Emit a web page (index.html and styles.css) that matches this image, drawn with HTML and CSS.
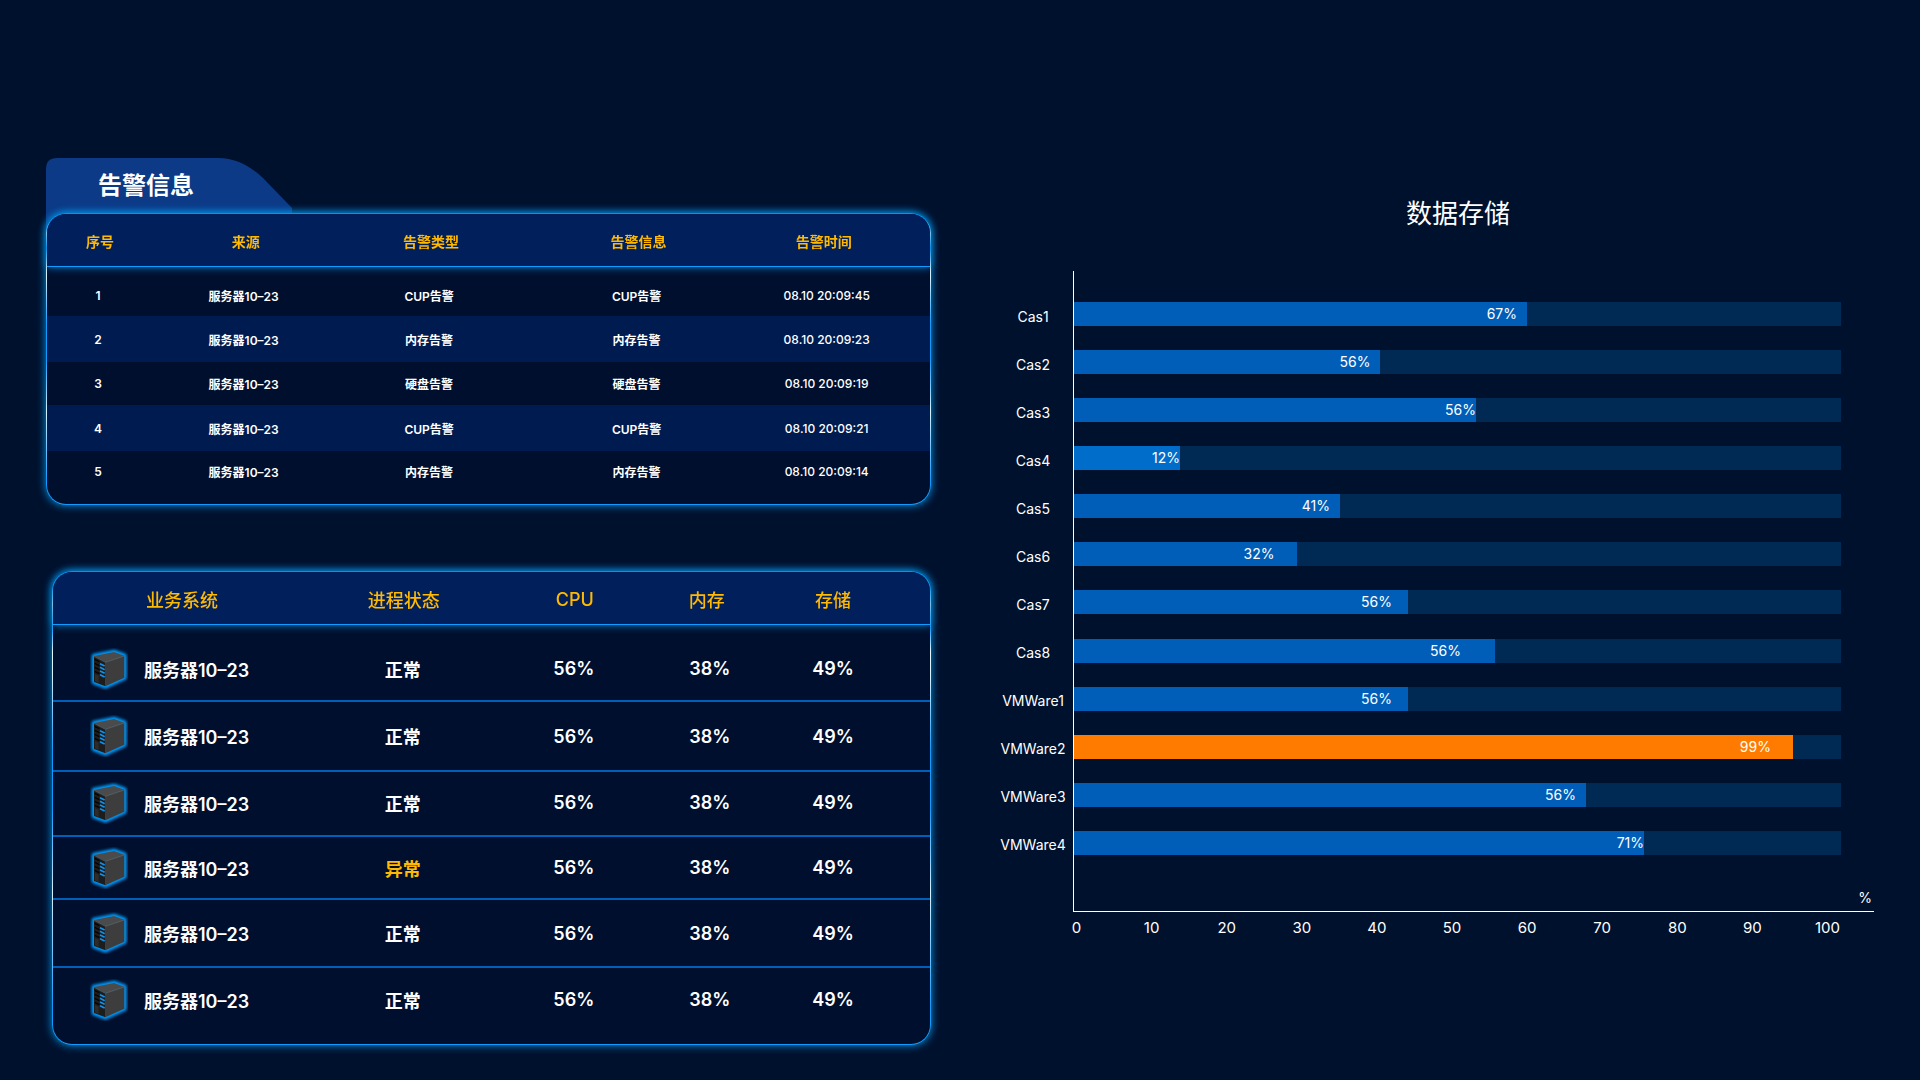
FILE: index.html
```html
<!DOCTYPE html>
<html lang="zh-CN">
<head>
<meta charset="utf-8">
<meta name="viewport" content="width=device-width, initial-scale=1">
<title>告警信息</title>
<link rel="stylesheet" href="styles.css">
</head>
<body>
<svg class="defs" aria-hidden="true">
  <defs>
    <filter id="glow" x="-20%" y="-20%" width="140%" height="140%"><feGaussianBlur stdDeviation="4"/></filter>
    <symbol id="server" viewBox="0 0 114 126">
      <path d="M12 24 72 12 103 23V89L46 115 12 102Z" fill="#009dff" stroke="#009dff" stroke-width="14" stroke-linejoin="round" filter="url(#glow)"/>
      <path d="M12 24 72 12 103 23 46 42Z" fill="#4b4b4b"/>
      <path d="M46 42 103 23V89L46 115Z" fill="#3d3d3d"/>
      <path d="M12 24 46 42V115L12 102Z" fill="#1d1d1d"/>
      <path d="M12 25 46 43 103 24" fill="none" stroke="#626262" stroke-width="2"/>
      <path d="M14 34 28 41M14 46 28 53M14 58 28 65M14 70 28 77" stroke="#050505" stroke-width="4"/>
      <path d="M30 47 44 54M30 58 44 65M30 69 44 76M30 80 44 87" stroke="#1590e8" stroke-width="5"/>
      <path d="M15 78 26 83V105L15 100Z" fill="#2c2c2c"/>
    </symbol>
  </defs>
</svg>
<main class="dashboard">
  <div class="left">
    <section class="alarms">
      <header class="tab">
        <svg class="tab-shape" viewBox="0 0 246 76" aria-hidden="true"><path d="M0 76V11Q0 0 11 0H172C190 0 204 8 217 20L246 50V56H60L0 76Z"/></svg>
        <h2 class="tab-title">告警信息</h2>
      </header>
      <div class="panel">
        <table class="table table-alarms">
          <colgroup><col class="c-no"><col class="c-source"><col class="c-type"><col class="c-info"><col class="c-time"></colgroup>
          <thead><tr><th>序号</th><th>来源</th><th>告警类型</th><th>告警信息</th><th>告警时间</th></tr></thead>
          <tbody>
            <tr><td>1</td><td>服务器10–23</td><td>CUP告警</td><td>CUP告警</td><td>08.10 20:09:45</td></tr>
            <tr><td>2</td><td>服务器10–23</td><td>内存告警</td><td>内存告警</td><td>08.10 20:09:23</td></tr>
            <tr><td>3</td><td>服务器10–23</td><td>硬盘告警</td><td>硬盘告警</td><td>08.10 20:09:19</td></tr>
            <tr><td>4</td><td>服务器10–23</td><td>CUP告警</td><td>CUP告警</td><td>08.10 20:09:21</td></tr>
            <tr><td>5</td><td>服务器10–23</td><td>内存告警</td><td>内存告警</td><td>08.10 20:09:14</td></tr>
          </tbody>
        </table>
      </div>
    </section>
    <section class="panel panel-systems">
      <table class="table table-systems">
        <colgroup><col class="s-name"><col class="s-state"><col class="s-cpu"><col class="s-mem"><col class="s-disk"></colgroup>
        <thead><tr><th>业务系统</th><th>进程状态</th><th>CPU</th><th>内存</th><th>存储</th></tr></thead>
        <tbody>
          <tr><td><span class="name"><svg class="server"><use href="#server"/></svg>服务器10–23</span></td><td>正常</td><td>56%</td><td>38%</td><td>49%</td></tr>
          <tr><td><span class="name"><svg class="server"><use href="#server"/></svg>服务器10–23</span></td><td>正常</td><td>56%</td><td>38%</td><td>49%</td></tr>
          <tr><td><span class="name"><svg class="server"><use href="#server"/></svg>服务器10–23</span></td><td>正常</td><td>56%</td><td>38%</td><td>49%</td></tr>
          <tr><td><span class="name"><svg class="server"><use href="#server"/></svg>服务器10–23</span></td><td class="warn">异常</td><td>56%</td><td>38%</td><td>49%</td></tr>
          <tr><td><span class="name"><svg class="server"><use href="#server"/></svg>服务器10–23</span></td><td>正常</td><td>56%</td><td>38%</td><td>49%</td></tr>
          <tr><td><span class="name"><svg class="server"><use href="#server"/></svg>服务器10–23</span></td><td>正常</td><td>56%</td><td>38%</td><td>49%</td></tr>
        </tbody>
      </table>
    </section>
  </div>
  <section class="storage">
    <h2 class="storage-title">数据存储</h2>
    <div class="chart">
      <ul class="labels">
        <li>Cas1</li><li>Cas2</li><li>Cas3</li><li>Cas4</li><li>Cas5</li><li>Cas6</li><li>Cas7</li><li>Cas8</li><li>VMWare1</li><li>VMWare2</li><li>VMWare3</li><li>VMWare4</li>
      </ul>
      <div class="plot">
        <ul class="bars">
          <li class="track"><span class="fill" style="width:59.06%">67%</span></li>
          <li class="track"><span class="fill" style="width:39.96%">56%</span></li>
          <li class="track"><span class="fill inset-none" style="width:52.41%">56%</span></li>
          <li class="track"><span class="fill fill-light inset-none" style="width:13.82%">12%</span></li>
          <li class="track"><span class="fill" style="width:34.68%">41%</span></li>
          <li class="track"><span class="fill inset-large" style="width:29.01%">32%</span></li>
          <li class="track"><span class="fill inset-medium" style="width:43.55%">56%</span></li>
          <li class="track"><span class="fill inset-huge" style="width:54.89%">56%</span></li>
          <li class="track"><span class="fill inset-medium" style="width:43.55%">56%</span></li>
          <li class="track"><span class="fill fill-warn inset-large" style="width:93.74%">99%</span></li>
          <li class="track"><span class="fill" style="width:66.75%">56%</span></li>
          <li class="track"><span class="fill inset-none" style="width:74.32%">71%</span></li>
        </ul>
        <div class="unit">%</div>
      </div>
      <ol class="ticks">
        <li>0</li><li>10</li><li>20</li><li>30</li><li>40</li><li>50</li><li>60</li><li>70</li><li>80</li><li>90</li><li>100</li>
      </ol>
    </div>
  </section>
</main>
</body>
</html>
```
FILE: styles.css
```css
:root {
  --bg: #00112e;
  --line: #0f9bff;
  --accent: #ffb900;
}

* { box-sizing: border-box; }

body {
  margin: 0;
  min-height: 100vh;
  background: var(--bg);
  color: #fff;
  font-family: Inter, "Noto Sans CJK SC", sans-serif;
}

h2, ul, ol { margin: 0; padding: 0; list-style: none; }

.defs { position: absolute; width: 0; height: 0; }

.dashboard {
  display: grid;
  grid-template-columns: 885fr 876fr;
  column-gap: 67px;
  padding: 158px 46px 35px;
}

/* Alarm tab */
.tab {
  position: relative;
  display: flex;
  height: 55px;
  padding-left: 52px;
}

.tab-shape {
  position: absolute;
  left: 0;
  top: 0;
  width: 246px;
  height: 76px;
  fill: #0c3a86;
}

.tab-title {
  position: relative;
  font-size: 24px;
  font-weight: 600;
  line-height: 56px;
}

/* Panels */
.panel {
  position: relative;
  border: 1px solid transparent;
  border-radius: 20px;
  background:
    linear-gradient(#000f2d, #000f2d) padding-box,
    linear-gradient(var(--line) 3%, #d8f2ff 7%, var(--line) 12%, #e4f6ff 17%, #d8f2ff 22%, var(--line) 38%, var(--line) 50%, #d8f2ff 68%, var(--line) 92%) border-box;
  box-shadow: 0 0 8px #009df0;
}

.panel-systems { margin: 66px 0 0 6px; }

.table {
  width: 100%;
  table-layout: fixed;
  border-collapse: separate;
  border-spacing: 0;
  text-align: center;
}

.table th, .table td { padding: 0; }

.table thead { filter: drop-shadow(0 0 4px #0088d8); }

.table th {
  height: 53px;
  padding-top: 2px;
  background: #001f5b;
  border-bottom: 1px solid var(--line);
  color: var(--accent);
}

.table th:first-child { border-top-left-radius: 19px; }
.table th:last-child { border-top-right-radius: 19px; }
.table th:last-child { padding-right: 36px; }

.table-alarms { font-size: 12px; font-weight: 600; }
.table-alarms th { font-size: 14px; font-weight: 700; }
.table-alarms td { height: 43px; padding-right: 4px; }
.table-alarms tr:nth-child(even) td { height: 46px; background: #001b50; }
.table-alarms tbody tr:first-child td { height: 49px; padding-top: 8px; }
.table-alarms tbody tr:last-child td { height: 53px; padding-bottom: 12px; }
.table-alarms td:last-child { padding-right: 30px; font-weight: 500; }

.c-no { width: 12%; }
.c-source, .c-type { width: 21%; }
.c-info { width: 26%; }
.c-time { width: 20%; }

.table-systems { font-size: 18px; font-weight: 600; }
.table-systems th { font-weight: 500; }
.table-systems th:first-child { padding-left: 93px; text-align: left; }
.table-systems th:nth-child(4) { padding-right: 8px; }
.table-systems td { height: 65px; padding-right: 2px; border-bottom: 2px solid #005fb8; }
.table-systems td:last-child { padding-right: 36px; }
.table-systems tbody tr:nth-child(1) td { height: 77px; padding-top: 12px; }
.table-systems tbody tr:nth-child(2) td { height: 70px; }
.table-systems tbody tr:nth-child(3) td { padding-bottom: 2px; }
.table-systems tbody tr:nth-child(4) td { height: 63px; }
.table-systems tbody tr:nth-child(5) td { height: 68px; }
.table-systems tbody tr:nth-child(6) td { height: 76px; padding-bottom: 13px; border-bottom: 0; }
.table-systems .warn { color: var(--accent); }

.s-name { width: 29%; }
.s-state { width: 22%; }
.s-cpu { width: 17%; }
.s-mem { width: 14%; }
.s-disk { width: 18%; }

.name {
  display: flex;
  align-items: center;
  gap: 16px;
  padding-left: 37px;
}

.server { width: 38px; height: 42px; }

/* Storage chart */
.storage { padding-top: 35px; }

.storage-title {
  padding: 0 32px 0 76px;
  font-size: 26px;
  font-weight: 400;
  line-height: 42px;
  text-align: center;
}

.chart {
  display: grid;
  grid-template-columns: 70px 1fr;
  column-gap: 5px;
  margin-top: 36px;
  font-size: 14px;
  line-height: 24px;
}

.labels, .bars {
  display: flex;
  flex-direction: column;
  justify-content: space-between;
}

.labels { height: 552px; margin-top: 34px; text-align: center; }

.plot {
  border-left: 1px solid #fff;
  border-bottom: 1px solid #fff;
  padding: 31px 2px 3px 0;
}

.bars { height: 553px; margin: 0 31px 33px 0; }

.track { background: #002a54; }

.fill {
  display: block;
  height: 24px;
  padding-right: 10px;
  background: #005eb8;
  text-align: right;
}

.fill-light { background: #006dcb; }
.fill-warn { background: #ff7b00; }
.inset-none { padding-right: 0; }
.inset-medium { padding-right: 16px; }
.inset-large { padding-right: 22px; }
.inset-huge { padding-right: 34px; }

.unit { line-height: 20px; text-align: right; }

.ticks {
  grid-column: 2;
  display: grid;
  grid-template-columns: repeat(11, 1fr);
  margin: 4px 9px 0 -34px;
  font-size: 15px;
  text-align: center;
}
```
